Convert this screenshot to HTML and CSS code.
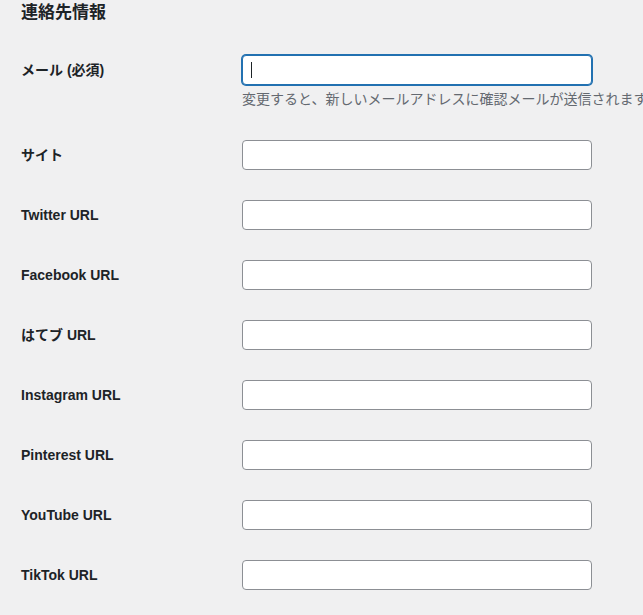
FILE: index.html
```html
<!DOCTYPE html>
<html lang="ja">
<head>
    <meta charset="UTF-8">
    <title>連絡先情報</title>
    <link rel="stylesheet" href="styles.css">
</head>
<body>
    <h2 class="section-title">連絡先情報</h2>

    <div class="form-table">
        <div class="form-row">
            <label class="form-label" for="email">メール (必須)</label>
            <div class="form-field">
                <div class="input-wrap is-focused">
                    <input class="regular-text" type="email" id="email">
                </div>
                <p class="description">変更すると、新しいメールアドレスに確認メールが送信されます。</p>
            </div>
        </div>
        <div class="form-row">
            <label class="form-label" for="url">サイト</label>
            <div class="form-field"><input class="regular-text" type="url" id="url"></div>
        </div>
        <div class="form-row">
            <label class="form-label" for="twitter">Twitter URL</label>
            <div class="form-field"><input class="regular-text" type="url" id="twitter"></div>
        </div>
        <div class="form-row">
            <label class="form-label" for="facebook">Facebook URL</label>
            <div class="form-field"><input class="regular-text" type="url" id="facebook"></div>
        </div>
        <div class="form-row">
            <label class="form-label" for="hatena">はてブ URL</label>
            <div class="form-field"><input class="regular-text" type="url" id="hatena"></div>
        </div>
        <div class="form-row">
            <label class="form-label" for="instagram">Instagram URL</label>
            <div class="form-field"><input class="regular-text" type="url" id="instagram"></div>
        </div>
        <div class="form-row">
            <label class="form-label" for="pinterest">Pinterest URL</label>
            <div class="form-field"><input class="regular-text" type="url" id="pinterest"></div>
        </div>
        <div class="form-row">
            <label class="form-label" for="youtube">YouTube URL</label>
            <div class="form-field"><input class="regular-text" type="url" id="youtube"></div>
        </div>
        <div class="form-row">
            <label class="form-label" for="tiktok">TikTok URL</label>
            <div class="form-field"><input class="regular-text" type="url" id="tiktok"></div>
        </div>
    </div>
</body>
</html>
```

FILE: styles.css
```css
html {
    overflow: hidden;
}
body {
    margin: 0;
    padding: 0 0 0 21px;
    background-color: #f0f0f1;
    color: #1d2327;
    font-family: "Liberation Sans", "Noto Sans CJK JP", sans-serif;
    font-size: 14px;
}
h2.section-title {
    margin: 2px 0 16px;
    font-size: 17px;
    line-height: 22px;
    font-weight: 700;
}
div.form-row {
    display: flex;
    padding: 15px 0;
}
label.form-label {
    flex: 0 0 221px;
    padding-top: 6px;
    line-height: 18px;
    font-weight: 700;
}
div.form-field {
    flex: 1;
    min-width: 0;
}
div.input-wrap {
    position: relative;
    width: 350px;
}
input.regular-text {
    display: block;
    box-sizing: border-box;
    width: 350px;
    height: 30px;
    margin: 0;
    padding: 0 8px;
    border: 1px solid #8c8f94;
    border-radius: 4px;
    background: #fff;
    font: inherit;
    outline: none;
}
div.is-focused > input.regular-text {
    border-color: #2271b1;
    box-shadow: 0 0 0 1px #2271b1;
}
/* fake caret, the screenshot was taken with the field focused */
div.is-focused::after {
    content: '';
    position: absolute;
    left: 9px;
    top: 7px;
    width: 1px;
    height: 16px;
    background: #1d2327;
}
p.description {
    margin: 4px 0 0;
    line-height: 21px;
    color: #646970;
    white-space: nowrap;
}
```
